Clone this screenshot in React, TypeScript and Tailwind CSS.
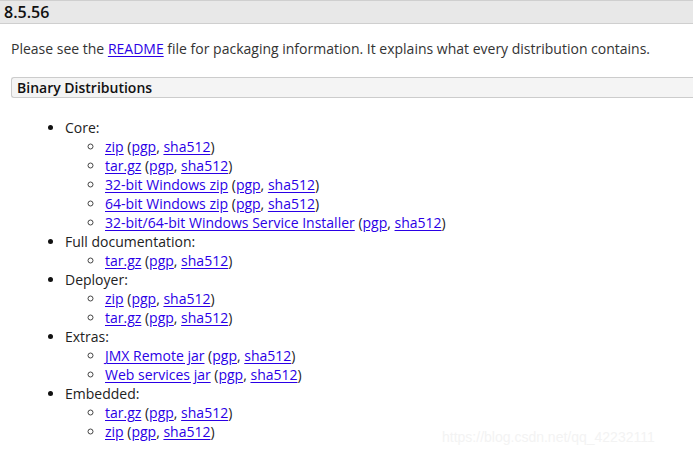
type Entry = { label: string; files: string[] };

const groups: Entry[] = [
  {
    label: "Core:",
    files: [
      "zip",
      "tar.gz",
      "32-bit Windows zip",
      "64-bit Windows zip",
      "32-bit/64-bit Windows Service Installer",
    ],
  },
  { label: "Full documentation:", files: ["tar.gz"] },
  { label: "Deployer:", files: ["zip", "tar.gz"] },
  { label: "Extras:", files: ["JMX Remote jar", "Web services jar"] },
  { label: "Embedded:", files: ["tar.gz", "zip"] },
];

function A({ children }: { children: React.ReactNode }) {
  return (
    <a href="#" className="text-[#2a00e6] underline underline-offset-2">
      {children}
    </a>
  );
}

export default function App() {
  return (
    <div
      className="relative w-[693px] h-[456px] overflow-hidden bg-white text-[#222] text-[14px] leading-[19px]"
      style={{ fontFamily: '"Open Sans", "Noto Sans", sans-serif' }}
    >
      {/* Version header */}
      <div className="h-[24px] bg-[#e8e8e8] border-t border-b border-[#cfcfcf] pl-[4px] text-[16px] leading-[22px] font-semibold text-[#111]">
        8.5.56
      </div>

      <div className="pl-[11px]">
        <p className="mt-[15px] text-[#333]">
          Please see the <A>README</A> file for packaging information. It
          explains what every distribution contains.
        </p>

        <div className="mt-[19px] h-[21px] bg-[#f4f4f4] border border-r-0 border-[#cccccc] rounded-l-[3px] pl-[5px] leading-[19px] font-semibold text-[#111]">
          Binary Distributions
        </div>

        <ul className="mt-[20px] ml-[54px] list-disc">
          {groups.map((g) => (
            <li key={g.label} className="marker:text-[#111]">
              {g.label}
              <ul className="ml-[40px] list-[circle]">
                {g.files.map((f, i) => (
                  <li key={i} className="marker:text-[#444]">
                    <A>{f}</A> (<A>pgp</A>, <A>sha512</A>)
                  </li>
                ))}
              </ul>
            </li>
          ))}
        </ul>
      </div>

      {/* watermark */}
      <div
        className="absolute left-[442px] top-[428px] text-[14px] text-[#f3f3f3]"
        style={{ fontFamily: '"Liberation Sans", Arial, sans-serif' }}
      >
        https://blog.csdn.net/qq_42232111
      </div>
    </div>
  );
}
